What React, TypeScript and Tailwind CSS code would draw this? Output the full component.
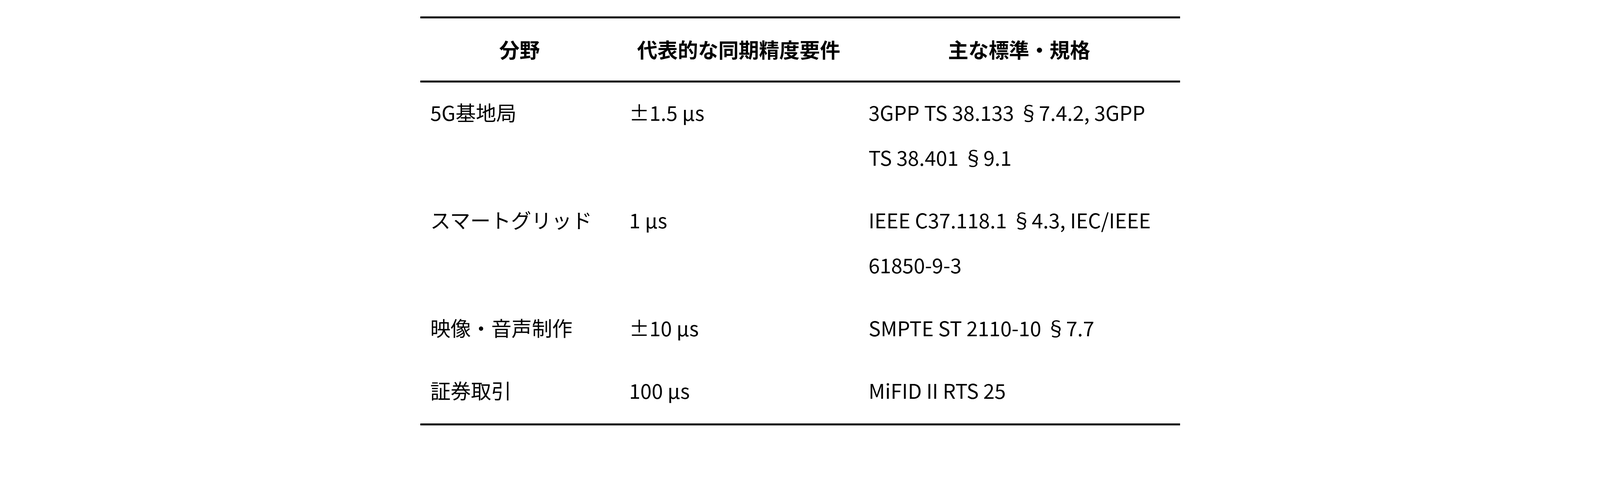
import React from "react";

const rows: [string, string, string][] = [
  ["5G基地局", "±1.5 μs", "3GPP TS 38.133 §7.4.2, 3GPP TS 38.401 §9.1"],
  ["スマートグリッド", "1 μs", "IEEE C37.118.1 §4.3, IEC/IEEE 61850-9-3"],
  ["映像・音声制作", "±10 μs", "SMPTE ST 2110-10 §7.7"],
  ["証券取引", "100 μs", "MiFID II RTS 25"],
];

export default function App() {
  return (
    <div
      className="w-full min-h-screen bg-white pt-[42px] text-black"
      style={{ fontFamily: '"Noto Sans CJK JP", "Noto Sans", sans-serif' }}
    >
      <table className="mx-auto w-[1945px] border-collapse table-fixed text-[52px] leading-[114.8px] border-t-[5.2px] border-b-[5.2px] border-black">
        <colgroup>
          <col className="w-[509px]" />
          <col className="w-[613px]" />
          <col className="w-[823px]" />
        </colgroup>
        <thead>
          <tr className="border-b-[5.2px] border-black">
            <th className="px-[26px] py-[22.3px] font-bold text-center">分野</th>
            <th className="px-[26px] py-[22.3px] font-bold text-center">代表的な同期精度要件</th>
            <th className="px-[26px] py-[22.3px] font-bold text-center">主な標準・規格</th>
          </tr>
        </thead>
        <tbody>
          {rows.map((r, i) => (
            <tr key={i}>
              <td className="px-[26px] pt-[18.8px] pb-[26.8px] align-top font-normal text-left">{r[0]}</td>
              <td className="px-[26px] pt-[18.8px] pb-[26.8px] align-top font-normal text-left">{r[1]}</td>
              <td className="px-[26px] pt-[18.8px] pb-[26.8px] align-top font-normal text-left">{r[2]}</td>
            </tr>
          ))}
        </tbody>
      </table>
    </div>
  );
}
